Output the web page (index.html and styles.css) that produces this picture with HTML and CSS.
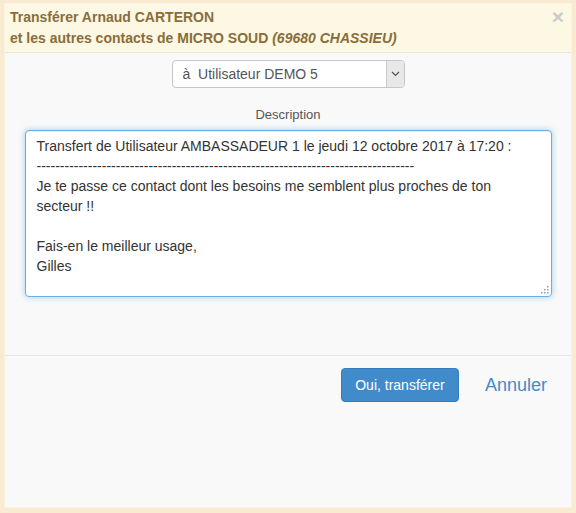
FILE: index.html
```html
<!DOCTYPE html>
<html lang="fr">
<head>
<meta charset="utf-8">
<link rel="stylesheet" href="styles.css">
</head>
<body>
<div class="frame">
  <div class="modal">
    <div class="header">
      <div class="title">Transférer Arnaud CARTERON<br>et les autres contacts de MICRO SOUD <i>(69680 CHASSIEU)</i></div>
      <span class="close">×</span>
    </div>
    <div class="body">
      <div class="select">
        <span class="select-text">à&nbsp; Utilisateur DEMO 5</span>
        <span class="select-arrow"><svg width="9" height="6" viewBox="0 0 9 6"><path d="M1 1 L4.5 4.5 L8 1" fill="none" stroke="#555" stroke-width="1.2"/></svg></span>
      </div>
      <div class="label">Description</div>
      <div class="desc-wrap">
        <textarea class="desc">Transfert de Utilisateur AMBASSADEUR 1 le jeudi 12 octobre 2017 à 17:20 :
---------------------------------------------------------------------------------
Je te passe ce contact dont les besoins me semblent plus proches de ton secteur !!

Fais-en le meilleur usage,
Gilles</textarea>
        <svg class="grip" width="8" height="8" viewBox="0 0 8 8"><g fill="#9a9a9a"><rect x="6" y="0" width="1.5" height="1.5"/><rect x="3" y="3" width="1.5" height="1.5"/><rect x="6" y="3" width="1.5" height="1.5"/><rect x="0" y="6" width="1.5" height="1.5"/><rect x="3" y="6" width="1.5" height="1.5"/><rect x="6" y="6" width="1.5" height="1.5"/></g></svg>
      </div>
    </div>
    <div class="footer">
      <button class="btn">Oui, transférer</button>
      <span class="cancel">Annuler</span>
    </div>
  </div>
</div>
</body>
</html>
```
FILE: styles.css
```css
html, body {
  margin: 0;
  padding: 0;
}
body {
  font-family: "Liberation Sans", Arial, sans-serif;
  background: #f7e9cf;
}
.frame {
  width: 576px;
  height: 513px;
  box-sizing: border-box;
  padding: 3px 4px 5px 4px;
  background: #f8ebd2;
}
.modal {
  height: 100%;
  background: #f9f9f9;
  border: 1px solid #fbf3e2;
  box-sizing: border-box;
  display: flex;
  flex-direction: column;
}
.header {
  position: relative;
  background: #fcf8e3;
  padding: 3px 5px 3px 5px;
  border-bottom: 1px solid #ebe6d3;
}
.title {
  color: #8a6d3b;
  font-weight: bold;
  font-size: 14px;
  line-height: 21px;
}
.close {
  position: absolute;
  right: 7px;
  top: 1px;
  font-size: 21px;
  font-weight: bold;
  color: #cacaca;
  line-height: 24px;
}
.body {
  display: flex;
  flex-direction: column;
  align-items: center;
  padding: 7px 19px 0 19px;
  border-bottom: 1px solid #e5e5e5;
  height: 303px;
  box-sizing: border-box;
}
.select {
  width: 233px;
  height: 28px;
  box-sizing: border-box;
  border: 1px solid #c6c6c6;
  border-radius: 4px;
  background: #fff;
  display: flex;
  align-items: stretch;
  overflow: hidden;
}
.select-text {
  flex: 1;
  font-size: 14px;
  color: #555;
  line-height: 26px;
  padding-left: 10px;
}
.select-arrow {
  width: 17px;
  background: #e8e8e8;
  border-left: 1px solid #c9c9c9;
  display: flex;
  align-items: center;
  justify-content: center;
}
.label {
  margin-top: 19px;
  font-size: 13px;
  color: #555;
  line-height: 16px;
}
.desc-wrap {
  position: relative;
  margin-top: 7px;
  width: 527px;
  height: 167px;
}
.desc {
  display: block;
  width: 100%;
  height: 100%;
  box-sizing: border-box;
  border: 1px solid #66afe9;
  border-radius: 4px;
  box-shadow: inset 0 1px 1px rgba(0,0,0,.075), 0 0 6px rgba(102,175,233,.6);
  outline: none;
  padding: 5px 11px;
  font-family: "Liberation Sans", Arial, sans-serif;
  font-size: 14px;
  line-height: 20px;
  color: #333;
  background: #fff;
  resize: none;
  overflow: hidden;
}
.grip {
  position: absolute;
  right: 3px;
  bottom: 3px;
}
.footer {
  display: flex;
  justify-content: flex-end;
  align-items: center;
  padding: 12px 24px 0 0;
  gap: 26px;
}
.btn {
  width: 118px;
  height: 34px;
  background: #428bca;
  border: 1px solid #357ebd;
  border-radius: 4px;
  color: #fff;
  font-family: "Liberation Sans", Arial, sans-serif;
  font-size: 14px;
  padding: 0;
}
.cancel {
  font-size: 18px;
  color: #428bca;
}
```
